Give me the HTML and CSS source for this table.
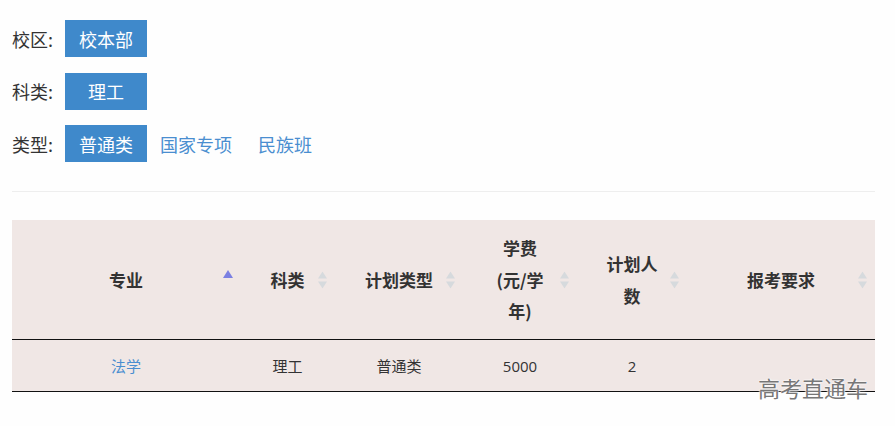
FILE: index.html
```html
<!DOCTYPE html>
<html lang="zh-CN">
<head>
<meta charset="utf-8">
<title>招生计划</title>
<link rel="stylesheet" href="styles.css">
</head>
<body>
<div class="page">
  <div class="filters">
    <div class="filter-row">
      <span class="filter-label">校区:</span>
      <a class="opt active">校本部</a>
    </div>
    <div class="filter-row">
      <span class="filter-label">科类:</span>
      <a class="opt active">理工</a>
    </div>
    <div class="filter-row">
      <span class="filter-label">类型:</span>
      <a class="opt active">普通类</a>
      <a class="opt link">国家专项</a>
      <a class="opt link">民族班</a>
    </div>
  </div>
  <hr class="divider">
  <div class="table-wrap">
    <table class="plan">
      <colgroup>
        <col class="c1"><col class="c2"><col class="c3"><col class="c4"><col class="c5"><col class="c6">
      </colgroup>
      <thead>
        <tr>
          <th>专业<span class="sort asc"><svg width="10" height="8" viewBox="0 0 10 8"><path d="M5 0L10 8H0Z" fill="#7b80e2"/></svg></span></th>
          <th>科类<span class="sort"><svg width="9" height="17" viewBox="0 0 9 17"><path d="M4.5 0L9 7H0Z" fill="#d6dadd"/><path d="M4.5 17L9 10H0Z" fill="#d6dadd"/></svg></span></th>
          <th>计划类型<span class="sort"><svg width="9" height="17" viewBox="0 0 9 17"><path d="M4.5 0L9 7H0Z" fill="#d6dadd"/><path d="M4.5 17L9 10H0Z" fill="#d6dadd"/></svg></span></th>
          <th class="narrow">学费<br>(元/学<br>年)<span class="sort"><svg width="9" height="17" viewBox="0 0 9 17"><path d="M4.5 0L9 7H0Z" fill="#d6dadd"/><path d="M4.5 17L9 10H0Z" fill="#d6dadd"/></svg></span></th>
          <th class="narrow">计划人<br>数<span class="sort"><svg width="9" height="17" viewBox="0 0 9 17"><path d="M4.5 0L9 7H0Z" fill="#d6dadd"/><path d="M4.5 17L9 10H0Z" fill="#d6dadd"/></svg></span></th>
          <th>报考要求<span class="sort"><svg width="9" height="17" viewBox="0 0 9 17"><path d="M4.5 0L9 7H0Z" fill="#d6dadd"/><path d="M4.5 17L9 10H0Z" fill="#d6dadd"/></svg></span></th>
        </tr>
      </thead>
      <tbody>
        <tr>
          <td><a class="major">法学</a></td>
          <td>理工</td>
          <td>普通类</td>
          <td class="num">5000</td>
          <td class="num">2</td>
          <td></td>
        </tr>
      </tbody>
    </table>
    <div class="watermark">高考直通车</div>
  </div>
</div>
</body>
</html>
```
FILE: styles.css
```css
html, body {
  margin: 0;
  padding: 0;
  background: #fefefe;
}
body {
  font-family: "Noto Sans CJK SC", "Microsoft YaHei", sans-serif;
  color: #333;
  min-height: 426px;
}
.page {
  padding: 20px 20px 0 12px;
}
.filters {
  display: flex;
  flex-direction: column;
  gap: 15.5px;
}
.filter-row {
  display: flex;
  align-items: center;
  height: 37px;
}
.filter-label {
  width: 53px;
  font-size: 18px;
  color: #333;
}
.opt {
  display: flex;
  align-items: center;
  justify-content: center;
  height: 37px;
  font-size: 18px;
  cursor: pointer;
}
.opt.active {
  background: #3f89cb;
  color: #fff;
  width: 82px;
}
.opt.link {
  color: #4a8ed0;
  padding: 0 13px;
}
.divider {
  border: 0;
  border-top: 1px solid #eeeeee;
  margin: 29px 0 28px;
}
.table-wrap {
  position: relative;
}
.plan {
  width: 863px;
  border-collapse: collapse;
  table-layout: fixed;
  background: #f0e7e5;
}
.c1 { width: 228px; }
.c2 { width: 95px; }
.c3 { width: 128px; }
.c4 { width: 114px; }
.c5 { width: 110px; }
.c6 { width: 188px; }
.plan th {
  position: relative;
  height: 119px;
  padding: 0;
  font-size: 17px;
  font-weight: bold;
  line-height: 31.5px;
  color: #333;
  text-align: center;
  vertical-align: middle;
  border-bottom: 1px solid #111;
}
.plan th.narrow {
  padding: 0 26px;
}
.sort {
  position: absolute;
  right: 8px;
  top: 50%;
  transform: translateY(-50%);
  display: flex;
  line-height: 0;
}
.sort.asc {
  right: 7px;
  margin-top: -6px;
}
.plan td {
  height: 51px;
  padding: 0;
  font-size: 15px;
  text-align: center;
  vertical-align: middle;
  color: #333;
  border-bottom: 1px solid #111;
}
.plan td.num {
  font-family: "Open Sans", "Noto Sans CJK SC", sans-serif;
  font-size: 15px;
}
.major {
  color: #4a8ed0;
}
.watermark {
  position: absolute;
  z-index: 2;
  right: 7px;
  top: 155px;
  font-size: 22px;
  line-height: 24px;
  color: #777;
  text-shadow: 0 0 2px #fff, 0 0 2px #fff, 0 0 1px #fff;
}
```
